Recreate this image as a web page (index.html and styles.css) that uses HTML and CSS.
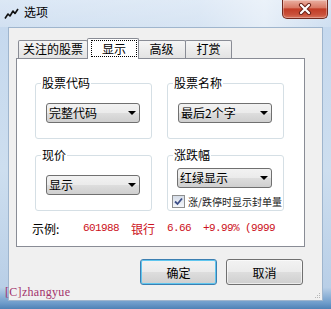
FILE: index.html
```html
<!DOCTYPE html>
<html lang="zh">
<head>
    <meta charset="UTF-8">
    <meta name="viewport" content="width=device-width, initial-scale=1.0">
    <title>选项</title>
    <link rel="stylesheet" href="styles.css">
</head>
<body>
    <div class="window">
        <div class="titlebar">
            <svg class="app-icon" width="15" height="13" viewBox="0 0 15 13">
                <polyline points="1,11.5 4,7 6,9 9,4 11,6.5 14,2" fill="none" stroke="#111" stroke-width="1.6" stroke-linejoin="round"/>
            </svg>
            <span class="title">选项</span>
            <div class="close-btn">
                <svg width="14" height="12" viewBox="0 0 14 12">
                    <path d="M3 2 L11 10 M11 2 L3 10" stroke="#6b2219" stroke-width="4.2" stroke-linecap="round"/>
                    <path d="M3 2 L11 10 M11 2 L3 10" stroke="#fff" stroke-width="2.2" stroke-linecap="round"/>
                </svg>
            </div>
        </div>

        <div class="frame">
            <div class="client">
                <div class="tabs">
                    <div class="tab tab-first">关注的股票</div>
                    <div class="tab tab-active"><span class="focus">显示</span></div>
                    <div class="tab tab-adv">高级</div>
                    <div class="tab tab-last">打赏</div>
                </div>

                <div class="panel">
                    <div class="groups">
                        <div class="group">
                            <span class="group-label">股票代码</span>
                            <div class="combo"><span>完整代码</span><i class="arrow"></i></div>
                        </div>
                        <div class="group">
                            <span class="group-label">股票名称</span>
                            <div class="combo"><span>最后2个字</span><i class="arrow"></i></div>
                        </div>
                        <div class="group">
                            <span class="group-label">现价</span>
                            <div class="combo"><span>显示</span><i class="arrow"></i></div>
                        </div>
                        <div class="group group-change">
                            <span class="group-label">涨跌幅</span>
                            <div class="combo"><span>红绿显示</span><i class="arrow"></i></div>
                            <div class="check-row">
                                <span class="checkbox">
                                    <svg width="11" height="11" viewBox="0 0 11 11">
                                        <path d="M2 5.5 L4.5 8 L9 2.5" fill="none" stroke="#3d4f88" stroke-width="1.8"/>
                                    </svg>
                                </span>
                                <span class="check-text">涨/跌停时显示封单量</span>
                            </div>
                        </div>
                    </div>

                    <div class="sample">
                        <span class="sample-label">示例:</span>
                        <span class="red mono">601988</span>
                        <span class="red cjk">银行</span>
                        <span class="red mono">6.66</span>
                        <span class="red mono">+9.99%</span>
                        <span class="red mono tight">(9999</span>
                    </div>
                </div>

                <div class="buttons">
                    <button class="btn btn-default">确定</button>
                    <button class="btn">取消</button>
                </div>

                <div class="copyright">[C]zhangyue</div>

                <svg class="grip" width="7" height="7" viewBox="0 0 7 7">
                    <rect x="5" y="1" width="1" height="1" fill="#b7b7b7"/>
                    <rect x="3" y="3" width="1" height="1" fill="#b7b7b7"/>
                    <rect x="5" y="3" width="1" height="1" fill="#b7b7b7"/>
                    <rect x="1" y="5" width="1" height="1" fill="#b7b7b7"/>
                    <rect x="3" y="5" width="1" height="1" fill="#b7b7b7"/>
                    <rect x="5" y="5" width="1" height="1" fill="#b7b7b7"/>
                </svg>
            </div>
        </div>
    </div>
</body>
</html>
```

FILE: styles.css
```css
body {
    margin: 0;
    font-family: "Noto Sans CJK SC", "Liberation Sans", sans-serif;
    font-size: 12px;
    color: #000;
    background: #fff;
}
.window {
    width: 331px;
    height: 309px;
    box-sizing: border-box;
    overflow: hidden;
    background: linear-gradient(180deg, #d3e2f3 0%, #c6d9ee 9%, #cddeef 55%, #b9cfe7 93%, #6f9dcb 98%, #4f82b6 100%);
    display: flex;
    flex-direction: column;
}
.titlebar {
    height: 27px;
    display: flex;
    align-items: flex-start;
    background: linear-gradient(90deg, rgba(255,255,255,0.2) 0%, rgba(255,255,255,0.3) 60%, rgba(255,255,255,0.55) 80%, rgba(255,255,255,0.15) 100%);
}
.app-icon {
    margin: 7px 0 0 4px;
}
.title {
    margin: 4px 0 0 5px;
    line-height: 16px;
    font-size: 12px;
}
.close-btn {
    margin-left: auto;
    margin-right: 3px;
    width: 46px;
    height: 19px;
    box-sizing: border-box;
    border: 1px solid #70291f;
    border-top: none;
    border-radius: 0 0 5px 5px;
    background: linear-gradient(180deg, #eab0a2 0%, #d97a66 42%, #c23c26 50%, #c9503a 80%, #d8735c 100%);
    box-shadow: inset 0 0 0 1px rgba(255,255,255,0.3);
    display: flex;
    justify-content: center;
    align-items: center;
}
.frame {
    flex: 1;
    padding: 0 8px 8px 8px;
    display: flex;
}
.client {
    position: relative;
    flex: 1;
    box-sizing: border-box;
    border: 1px solid #9fb5cd;
    background: #f0f0f0;
    padding: 10px 0 0 7px;
}

/* tabs */
.tabs {
    display: flex;
    align-items: flex-end;
    height: 21px;
    padding-left: 2px;
    margin-bottom: -1px;
    position: relative;
    z-index: 1;
}
.tab {
    box-sizing: border-box;
    height: 18px;
    margin-bottom: 1px;
    border: 1px solid #898c95;
    border-bottom: none;
    border-radius: 2px 2px 0 0;
    background: linear-gradient(180deg, #f5f5f5, #e3e3e3);
    text-align: center;
    line-height: 16px;
}
.tab-first {
    width: 70px;
}
.tab-active {
    width: 52px;
    height: 21px;
    margin: 0 -2px 0 -1px;
    padding: 1px 1px 1px 3px;
    background: #fff;
    position: relative;
    z-index: 2;
}
.focus {
    display: block;
    height: 17px;
    box-sizing: border-box;
    border: 1px dotted #000;
    line-height: 15px;
}
.tab-adv {
    width: 49px;
}
.tab-last {
    width: 47px;
    margin-left: -1px;
}

/* panel */
.panel {
    width: 289px;
    height: 189px;
    box-sizing: border-box;
    border: 1px solid #898c95;
    background: #fff;
    padding: 24px 0 0 15px;
}
.groups {
    display: grid;
    grid-template-columns: 117px 117px;
    grid-auto-rows: 56px;
    column-gap: 15px;
    row-gap: 16px;
    margin-left: 3px;
}
.group {
    position: relative;
    box-sizing: border-box;
    border: 1px solid #d5dfe5;
    border-radius: 3px;
    padding: 19px 0 0 10px;
}
.group-label {
    position: absolute;
    top: -8px;
    left: 5px;
    padding: 0 1px;
    background: #fff;
    line-height: 14px;
}
.group-change {
    padding: 12px 0 0 4px;
}
.group-change .combo {
    margin-left: 5px;
    width: 95px;
}
.combo {
    width: 94px;
    height: 20px;
    box-sizing: border-box;
    border: 1px solid #707070;
    border-radius: 3px;
    background: linear-gradient(180deg, #f2f2f2 0%, #ebebeb 48%, #dddddd 52%, #cfcfcf 100%);
    display: flex;
    align-items: center;
    justify-content: space-between;
    padding: 0 3px 0 2px;
    line-height: 16px;
}
.arrow {
    width: 0;
    height: 0;
    border-left: 4px solid transparent;
    border-right: 4px solid transparent;
    border-top: 4px solid #000;
}
.check-row {
    display: flex;
    align-items: center;
    margin-top: 7px;
}
.checkbox {
    width: 13px;
    height: 13px;
    box-sizing: border-box;
    border: 1px solid #8e8f8f;
    background: linear-gradient(180deg, #d6dde8, #f4f6fa);
    display: flex;
    justify-content: center;
    align-items: center;
}
.check-text {
    margin-left: 3px;
    font-size: 10px;
    line-height: 12px;
    color: #222;
}

/* sample */
.sample {
    display: flex;
    align-items: center;
    margin-top: 10px;
    height: 14px;
}
.sample-label {
    width: 51px;
}
.red {
    color: #cc1020;
    margin-left: 12px;
}
.sample-label + .red {
    margin-left: 0;
}
.mono {
    font-family: "Liberation Mono", monospace;
    font-size: 11px;
    letter-spacing: -0.6px;
}
.cjk {
    font-size: 12px;
}
.tight {
    margin-left: 6px;
}

/* buttons */
.buttons {
    display: flex;
    justify-content: flex-end;
    gap: 9px;
    margin-top: 12px;
    padding-right: 19px;
}
.btn {
    width: 77px;
    height: 26px;
    box-sizing: border-box;
    border: 1px solid #707070;
    border-radius: 3px;
    background: linear-gradient(180deg, #f2f2f2 0%, #ebebeb 48%, #dddddd 52%, #cfcfcf 100%);
    font-family: "Noto Sans CJK SC", "Liberation Sans", sans-serif;
    font-size: 12px;
    color: #000;
    padding: 0;
    box-shadow: inset 0 0 0 1px rgba(255,255,255,0.6);
}
.btn-default {
    border-color: #3c7fb1;
    box-shadow: inset 0 0 0 1px #5fc6ef;
}
.copyright {
    margin: 1px 0 0 -11px;
    font-family: "Liberation Serif", serif;
    font-size: 12px;
    letter-spacing: 0.3px;
    line-height: 13px;
    color: #a3336b;
}
.grip {
    position: absolute;
    right: 1px;
    bottom: 1px;
}
```
